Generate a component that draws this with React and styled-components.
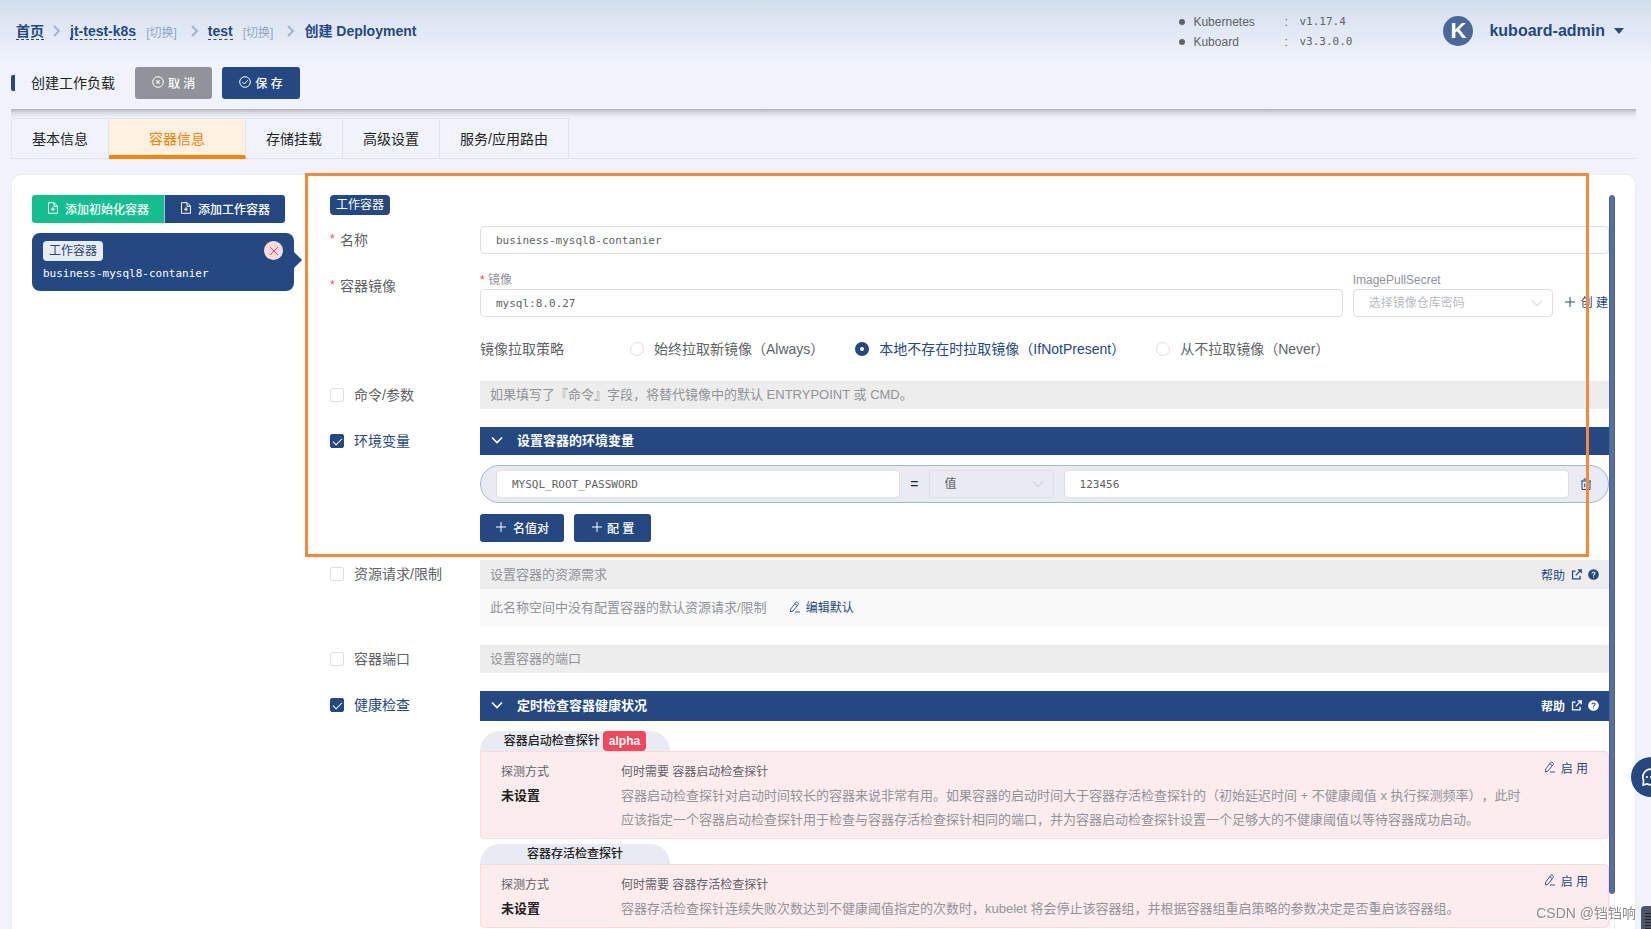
import React, { useState } from 'react';
import styled, { createGlobalStyle, css } from 'styled-components';

const navy = '#244882';

const GlobalStyle = createGlobalStyle`
  * {
    box-sizing: border-box;
  }
  body {
    margin: 0;
    overflow: hidden;
    background: #f0f3fc;
    color: #222;
    font-family: "Liberation Sans", "Noto Sans CJK SC", sans-serif;
    font-size: 14px;
  }
  button, input, select {
    margin: 0;
    font-family: inherit;
  }
  a {
    color: ${navy};
    text-decoration: none;
  }
`;

const Page = styled.div`
  display: flex;
  flex-direction: column;
  height: 100vh;
  overflow: hidden;
  background: linear-gradient(#d3dfec, #f0f3fc 64px);
`;

const Icon = styled.svg.attrs({ fill: 'none', stroke: 'currentColor', 'aria-hidden': true })`
  flex: none;
  width: ${({ $size }) => $size || 12}px;
  height: ${({ $size }) => $size || 12}px;
`;

/* ---------- top bar ---------- */

const TopBar = styled.header`
  display: flex;
  align-items: center;
  height: 62px;
  padding: 0 27px 0 16px;
`;

const Crumbs = styled.nav`
  display: flex;
  align-items: center;
  flex: 1;
  color: ${navy};
  font-weight: bold;
  line-height: 16px;

  a {
    border-bottom: 1px dashed ${navy};
  }
`;

const Switch = styled.button`
  margin-left: 10px;
  padding: 0;
  border: 0;
  background: none;
  color: #93a5c3;
  font-size: 12px;
`;

const CrumbArrow = styled(Icon).attrs({ viewBox: '0 0 8 12', strokeWidth: 2 })`
  width: 8px;
  margin: 0 9px 0 ${({ $wide }) => ($wide ? 14 : 9)}px;
  color: #a3b3cb;
`;

const Versions = styled.ul`
  margin: 0;
  padding: 2px 0 0;
  width: 264px;
  list-style: none;
  color: #606266;
  font-size: 12px;
  line-height: 20px;

  li {
    display: grid;
    grid-template-columns: 14px 91px 15px 1fr;
    align-items: center;
  }
  li::before {
    content: '';
    width: 6px;
    height: 6px;
    border-radius: 50%;
    background: #606266;
  }
`;

const Mono = styled.span`
  font-family: "DejaVu Sans Mono", monospace;
  font-size: 11px;
`;

const User = styled.button`
  display: flex;
  align-items: center;
  padding: 0;
  border: 0;
  background: none;
  color: ${navy};
  font-size: 16px;
  font-weight: bold;
`;

const Avatar = styled.span`
  width: 30px;
  height: 30px;
  margin-right: 16px;
  border-radius: 50%;
  background: #486999;
  color: #fff;
  font-size: 22px;
  line-height: 30px;
`;

const Caret = styled.span`
  margin-left: 9px;
  border: 5px solid transparent;
  border-top: 6px solid ${navy};
  border-bottom: 0;
`;

/* ---------- actions and tabs ---------- */

const Main = styled.main`
  display: flex;
  flex-direction: column;
  flex: 1;
  min-height: 0;
  padding: 0 15px 0 11px;
`;

const Actions = styled.div`
  display: flex;
  flex: none;
  align-items: center;
  gap: 10px;
  height: 47px;
  padding-bottom: 5px;

  h1 {
    margin: 0 10px 0 0;
    padding-left: 16px;
    border-left: 4px solid ${navy};
    border-radius: 2px;
    font-size: 14px;
    font-weight: normal;
    line-height: 16px;
  }
`;

const Shade = styled.div`
  flex: none;
  height: 9px;
  background: linear-gradient(#b0b2b8, #d9dbe2 40%, #f0f3fc);
`;

const Button = styled.button`
  display: inline-flex;
  align-items: center;
  gap: ${({ $spaced }) => ($spaced ? 4 : 6)}px;
  height: ${({ $tall }) => ($tall ? 32 : 28)}px;
  padding: 0 ${({ $spaced }) => ($spaced ? 17 : 15)}px 2px;
  border: 0;
  border-radius: 3px;
  background: ${({ $color }) => $color || navy};
  color: #fff;
  font-size: 12px;
  font-weight: 500;
`;

const Tabs = styled.div`
  display: flex;
  flex: none;
  height: 41px;
  margin-bottom: 15px;
  border-bottom: 1px solid #e0e4ee;
`;

const Tab = styled.button`
  height: 41px;
  padding: 0 20px 2px;
  border: 1px solid #e0e4ee;
  border-left-width: ${({ $first }) => ($first ? 1 : 0)}px;
  border-top-left-radius: ${({ $first }) => ($first ? 4 : 0)}px;
  background: none;
  color: #222;
  font-size: 14px;

  ${({ $active }) => $active && css`
    padding: 1px 40px 0;
    border-bottom: 4px solid #ff8200;
    background: #fff1e2;
    color: #ff8200;
  `}
`;

/* ---------- container list ---------- */

const Card = styled.div`
  display: flex;
  flex: 1;
  min-height: 0;
  padding: 20px 20px 0;
  border: 1px solid #e8ecf5;
  border-bottom: 0;
  border-radius: 10px 10px 0 0;
  background: #fff;
`;

const Side = styled.aside`
  flex: none;
  width: 262px;
  margin-right: 36px;
`;

const ButtonGroup = styled.div`
  display: flex;
  margin-bottom: 10px;

  button:first-child {
    border-radius: 3px 0 0 3px;
  }
  button:last-child {
    border-left: 1px solid #a7c5cc;
    border-radius: 0 3px 3px 0;
  }
`;

const ContainerItem = styled.div`
  position: relative;
  height: 58px;
  padding: 8px 11px;
  border-radius: 8px;
  background: ${navy};
  color: #fff;

  &::after {
    content: '';
    position: absolute;
    top: 19px;
    left: 100%;
    border: 8px solid transparent;
    border-left-color: ${navy};
    border-right: 0;
  }
`;

const ItemHead = styled.div`
  display: flex;
  justify-content: space-between;
  margin-bottom: 3px;
`;

const Tag = styled.span`
  display: inline-block;
  height: 20px;
  padding: 0 6px;
  border-radius: 4px;
  background: ${({ $light }) => ($light ? '#e8ebf3' : navy)};
  color: ${({ $light }) => ($light ? navy : '#fff')};
  font-size: 12px;
  line-height: 20px;
`;

const Remove = styled.button`
  display: grid;
  place-items: center;
  width: 19px;
  height: 19px;
  padding: 0;
  border: 0;
  border-radius: 50%;
  background: #fddadd;
  color: #f5475b;
`;

/* ---------- form ---------- */

const Form = styled.form`
  flex: 1;
  min-width: 0;
  overflow: hidden;
  margin: -30px 0 0 -30px;
  padding: 30px 0 0 30px;
`;

const Rail = styled.div`
  flex: none;
  width: 6px;
  border: solid #f0f0f3;
  border-width: 0 1px;

  &::before {
    content: '';
    display: block;
    height: 95%;
    margin: 0 -1px;
    border: 1px solid #4a6491;
    border-radius: 3px;
    background: #566f9d;
  }
`;

const Highlight = styled.div`
  position: relative;

  &::after {
    content: '';
    position: absolute;
    inset: -22px 20px -15px -25px;
    border: 3px solid #f98837;
    pointer-events: none;
  }
`;

const Title = styled.div`
  height: 31px;
`;

const Row = styled.div`
  display: grid;
  grid-template-columns: 150px minmax(0, 1fr);
  margin-bottom: 18px;
`;

const Label = styled.label`
  display: flex;
  align-items: center;
  height: 28px;
  padding-bottom: 2px;
  color: ${({ $on }) => ($on ? navy : '#606266')};
`;

const Star = styled.span`
  width: 10px;
  color: #f5475b;
  font-size: 12px;
`;

const SubLabel = styled.label`
  display: flex;
  height: 17px;
  color: #8f9298;
  font-size: 12px;
  line-height: 17px;

  ${Star} {
    width: 8px;
  }
`;

const Check = styled.input.attrs({ type: 'checkbox' })`
  appearance: none;
  display: grid;
  place-items: center;
  width: 14px;
  height: 14px;
  margin: 2px 10px 0 0;
  border: 1px solid #dcdfe6;
  border-radius: 2px;
  background: #fff;

  &:checked {
    border-color: ${navy};
    background: ${navy};
  }
  &:checked::after {
    content: '';
    width: 4px;
    height: 8px;
    margin-top: -2px;
    border: solid #fff;
    border-width: 0 1px 1px 0;
    transform: rotate(45deg);
  }
`;

const Radio = styled.input.attrs({ type: 'radio' })`
  appearance: none;
  width: 14px;
  height: 14px;
  margin: 2px 10px 0 0;
  border: 1px solid #dcdfe6;
  border-radius: 50%;
  background: #fff;

  &:checked {
    border: 5px solid ${navy};
  }
`;

const Policy = styled.div`
  display: flex;
  align-items: center;
  height: 28px;
  margin-top: 18px;
  color: #606266;
`;

const PolicyName = styled.span`
  width: 150px;
  padding-bottom: 2px;
`;

const RadioLabel = styled(Label)`
  margin-right: 31px;
`;

const Input = styled.input`
  width: 100%;
  min-width: 0;
  height: 28px;
  padding: 0 15px;
  border: 1px solid #dcdfe6;
  border-radius: 4px;
  background: #fff;
  color: #606266;
  font-family: "DejaVu Sans Mono", monospace;
  font-size: 11px;
`;

const SelectWrap = styled.div`
  position: relative;

  select {
    appearance: none;
    width: 100%;
    height: 28px;
    padding: 0 15px;
    border: 1px solid #dcdfe6;
    border-radius: 4px;
    background: ${({ $muted }) => ($muted ? '#e8ebf3' : '#fff')};
    color: ${({ $muted }) => ($muted ? '#606266' : '#b8bbc2')};
    font-size: 12px;
  }
  svg {
    position: absolute;
    top: 8px;
    right: 10px;
    color: #c0c4cc;
  }
`;

const ImageLine = styled.div`
  display: grid;
  grid-template-columns: minmax(0, 1fr) 200px auto;
  align-items: end;
  gap: 10px;
`;

const TextButton = styled.button`
  display: inline-flex;
  flex: none;
  align-items: center;
  gap: 5px;
  padding: 0;
  border: 0;
  background: none;
  color: ${navy};
  font-size: 12px;
`;

const CreateButton = styled(TextButton)`
  height: 28px;
  padding: 0 1px 3px;
`;

const Bar = styled.div`
  display: flex;
  align-items: center;
  height: ${({ $height }) => $height || 28}px;
  padding: 0 10px 3px;
  background: ${({ $open }) => ($open ? navy : '#ededed')};
  color: ${({ $open }) => ($open ? '#fff' : '#909399')};
  font-size: 13px;
  font-weight: ${({ $open }) => ($open ? 'bold' : 'normal')};

  > svg {
    margin: 0 14px 0 1px;
  }
`;

const Help = styled.a`
  display: flex;
  align-items: center;
  gap: 6px;
  margin: 2px 0 0 auto;
  color: ${({ $open }) => ($open ? '#fff' : navy)};
  font-size: 12px;
`;

const Note = styled.div`
  display: flex;
  align-items: center;
  gap: 22px;
  height: 38px;
  padding: 0 10px 3px;
  background: #f9f9f9;
  color: #909399;
  font-size: 13px;
`;

const Pair = styled.div`
  display: grid;
  grid-template-columns: 4fr auto 125px 5fr auto;
  align-items: center;
  gap: 10px;
  height: 38px;
  margin: 10px 0 11px;
  padding: 0 15px;
  border: 1px solid #a7b6cf;
  border-radius: 19px;
  background: #e8ebf3;
`;

const Buttons = styled.div`
  display: flex;
  gap: 10px;
`;

/* ---------- probes ---------- */

const ProbeTitle = styled.div`
  width: 190px;
  height: 20px;
  margin-top: ${({ $first }) => ($first ? 10 : 5)}px;
  border-radius: 20px 20px 0 0;
  background: #e8ebf3;
  font-size: 12px;
  font-weight: 500;
  line-height: 20px;
  text-align: center;
`;

const Alpha = styled.span`
  display: inline-block;
  height: 20px;
  margin-left: 3px;
  padding: 0 6px;
  border-radius: 4px;
  background: #f5475b;
  color: #fff;
  font-weight: bold;
`;

const ProbeBox = styled.div`
  display: grid;
  grid-template-columns: 120px minmax(0, 1fr) auto;
  align-items: start;
  padding: 8px 20px 6px;
  border: 1px solid #fbd9dc;
  border-radius: 0 4px 4px 4px;
  background: #fdecee;
  color: #606266;
  font-size: 12px;
  line-height: 24px;

  strong {
    display: block;
    color: #222;
    font-size: 13px;
  }
  p {
    margin: 0;
    color: #909399;
    font-size: 13px;
    text-spacing-trim: space-all;
  }
  button {
    height: 14px;
    margin-left: 20px;
  }
`;

/* ---------- overlays ---------- */

const Chat = styled.button`
  position: fixed;
  right: -20px;
  bottom: 132px;
  width: 40px;
  height: 40px;
  padding: 0 0 0 10px;
  border: 0;
  border-radius: 50%;
  background: ${navy};
  color: #fff;

  svg {
    display: block;
  }
`;

const Watermark = styled.div`
  position: fixed;
  right: 15px;
  bottom: 6px;
  color: #8c8c8c;
  font-size: 14px;
  line-height: 20px;
  text-shadow: 1px 1px 0 #fff;
`;

const Corner = styled.div`
  position: fixed;
  right: 0;
  bottom: 0;
  width: 10px;
  height: 23px;
  padding: 7px 0 0 4px;
  border-top-left-radius: 4px;
  background: #50566a;

  &::before {
    content: '';
    display: block;
    height: 16px;
    background: repeating-linear-gradient(#23262f 0 1px, #50566a 1px 3px);
  }
`;

const CloseCircle = () => (
  <Icon viewBox="0 0 12 12"><circle cx="6" cy="6" r="5.3" /><path d="M4.4 4.4l3.200 3.200M7.600 4.400L4.400 7.600" strokeWidth="1.3" /></Icon>
);

const CheckCircle = () => (
  <Icon viewBox="0 0 12 12"><circle cx="6" cy="6" r="5.3" /><path d="M3.4 6.1l1.9 1.9 3.4-3.7" /></Icon>
);

const FileAdd = () => (
  <Icon viewBox="0 0 12 12"><path d="M1.5.7h5.700l3.300 3.400v7.200h-9zM7 .9v3.400h3.300M6 5.200v4M4 7.200h4" /></Icon>
);

const Plus = () => (
  <Icon viewBox="0 0 12 12"><path d="M6 1v10M1 6h10" /></Icon>
);

const Down = (props) => (
  <Icon viewBox="0 0 12 12" {...props}><path d="M1 3.5l5 5 5-5" /></Icon>
);

const Pencil = () => (
  <Icon viewBox="0 0 12 12" strokeWidth=".9"><path d="M1.6 8.2L6.9 1.3a.9.9 0 0 1 1.3-.1l1 .8a.9.9 0 0 1 .1 1.3L4.1 10l-2.7.9zM5.9 2.7l2.3 1.8M6 11h5" /></Icon>
);

const Trash = () => (
  <Icon viewBox="0 0 14 14" $size={14}><path d="M2 4h10M3 4v8.5h8V4M5 4V2h4v2M5.7 6.5v3.6M8.3 6.5v3.6" /></Icon>
);

const HelpLink = ({ open }) => (
  <Help href="#help" $open={open}>
    帮助
    <Icon viewBox="0 0 12 12" $size={11} strokeWidth="1.4"><path d="M5 2.2H1.7v8.6h8.2V7.4M5.2 7l5.400-5.600M7.400 1h3.800v3.600" /></Icon>
    <Icon viewBox="0 0 12 12" $size={11}>
      <circle cx="6" cy="6" r="5.8" fill="currentColor" stroke="none" />
      <path d="M4.4 4.8c0-2.1 3.300-2.100 3.300-.1C7.700 5.800 6 5.800 6 7.300M6 8.300v1.100" stroke={open ? navy : '#fff'} strokeWidth="1.1" />
    </Icon>
  </Help>
);

const OptionRow = ({ label, checked, children }) => {
  const [on, setOn] = useState(!!checked);
  return (
    <Row>
      <Label $on={on}>
        <Check checked={on} onChange={(e) => setOn(e.target.checked)} />
        {label}
      </Label>
      <div>{children}</div>
    </Row>
  );
};

const Probe = ({ name, alpha, first, children }) => (
  <>
    <ProbeTitle $first={first}>
      {name}
      {alpha && <Alpha>alpha</Alpha>}
    </ProbeTitle>
    <ProbeBox>
      <div>探测方式<strong>未设置</strong></div>
      <div>何时需要 {name}<p>{children}</p></div>
      <TextButton type="button"><Pencil />启 用</TextButton>
    </ProbeBox>
  </>
);

const tabs = ['基本信息', '容器信息', '存储挂载', '高级设置', '服务/应用路由'];

const policies = [
  ['Always', '始终拉取新镜像（Always）'],
  ['IfNotPresent', '本地不存在时拉取镜像（IfNotPresent）'],
  ['Never', '从不拉取镜像（Never）'],
];

const Header = () => (
  <TopBar>
    <Crumbs>
      <a href="#home">首页</a>
      <CrumbArrow><path d="M1 1l5 5-5 5" /></CrumbArrow>
      <a href="#cluster">jt-test-k8s</a>
      <Switch>[切换]</Switch>
      <CrumbArrow $wide><path d="M1 1l5 5-5 5" /></CrumbArrow>
      <a href="#namespace">test</a>
      <Switch>[切换]</Switch>
      <CrumbArrow $wide><path d="M1 1l5 5-5 5" /></CrumbArrow>
      <span>创建 Deployment</span>
    </Crumbs>
    <Versions>
      <li>Kubernetes<span>:</span><Mono>v1.17.4</Mono></li>
      <li>Kuboard<span>:</span><Mono>v3.3.0.0</Mono></li>
    </Versions>
    <User>
      <Avatar>K</Avatar>
      kuboard-admin
      <Caret />
    </User>
  </TopBar>
);

export default function App() {
  const [tab, setTab] = useState(1);
  const [policy, setPolicy] = useState('IfNotPresent');

  return (
    <Page>
      <GlobalStyle />
      <Header />
      <Main>
        <Actions>
          <h1>创建工作负载</h1>
          <Button $tall $spaced $color="#909399"><CloseCircle />取 消</Button>
          <Button $tall $spaced><CheckCircle />保 存</Button>
        </Actions>
        <Shade />
        <Tabs>
          {tabs.map((name, i) => (
            <Tab key={name} $first={i === 0} $active={i === tab} onClick={() => setTab(i)}>{name}</Tab>
          ))}
        </Tabs>
        <Card>
          <Side>
            <ButtonGroup>
              <Button $color="#13bf8f"><FileAdd />添加初始化容器</Button>
              <Button><FileAdd />添加工作容器</Button>
            </ButtonGroup>
            <ContainerItem>
              <ItemHead>
                <Tag $light>工作容器</Tag>
                <Remove aria-label="删除">
                  <Icon viewBox="0 0 12 12"><path d="M2 2l8 8M10 2l-8 8" /></Icon>
                </Remove>
              </ItemHead>
              <Mono>business-mysql8-contanier</Mono>
            </ContainerItem>
          </Side>
          <Form>
            <Highlight>
              <Title><Tag>工作容器</Tag></Title>
              <Row>
                <Label htmlFor="name"><Star>*</Star>名称</Label>
                <Input id="name" defaultValue="business-mysql8-contanier" />
              </Row>
              <Row>
                <Label htmlFor="image"><Star>*</Star>容器镜像</Label>
                <div>
                  <ImageLine>
                    <div>
                      <SubLabel htmlFor="image"><Star>*</Star>镜像</SubLabel>
                      <Input id="image" defaultValue="mysql:8.0.27" />
                    </div>
                    <div>
                      <SubLabel htmlFor="secret">ImagePullSecret</SubLabel>
                      <SelectWrap>
                        <select id="secret"><option>选择镜像仓库密码</option></select>
                        <Down />
                      </SelectWrap>
                    </div>
                    <CreateButton type="button"><Plus />创 建</CreateButton>
                  </ImageLine>
                  <Policy>
                    <PolicyName>镜像拉取策略</PolicyName>
                    {policies.map(([value, text]) => (
                      <RadioLabel key={value} $on={policy === value}>
                        <Radio name="policy" checked={policy === value} onChange={() => setPolicy(value)} />
                        {text}
                      </RadioLabel>
                    ))}
                  </Policy>
                </div>
              </Row>
              <OptionRow label="命令/参数">
                <Bar>如果填写了『命令』字段，将替代镜像中的默认 ENTRYPOINT 或 CMD。</Bar>
              </OptionRow>
              <OptionRow label="环境变量" checked>
                <Bar $open><Down strokeWidth="1.6" />设置容器的环境变量</Bar>
                <Pair>
                  <Input aria-label="名称" defaultValue="MYSQL_ROOT_PASSWORD" />
                  <span>=</span>
                  <SelectWrap $muted>
                    <select aria-label="类型"><option>值</option></select>
                    <Down />
                  </SelectWrap>
                  <Input aria-label="值" defaultValue="123456" />
                  <TextButton type="button" aria-label="删除"><Trash /></TextButton>
                </Pair>
                <Buttons>
                  <Button type="button"><Plus />名值对</Button>
                  <Button type="button" $spaced><Plus />配 置</Button>
                </Buttons>
              </OptionRow>
            </Highlight>
            <OptionRow label="资源请求/限制">
              <Bar $height={29}>设置容器的资源需求<HelpLink /></Bar>
              <Note>
                此名称空间中没有配置容器的默认资源请求/限制
                <TextButton type="button"><Pencil />编辑默认</TextButton>
              </Note>
            </OptionRow>
            <OptionRow label="容器端口">
              <Bar>设置容器的端口</Bar>
            </OptionRow>
            <OptionRow label="健康检查" checked>
              <Bar $open $height={30}><Down strokeWidth="1.6" />定时检查容器健康状况<HelpLink open /></Bar>
              <Probe name="容器启动检查探针" alpha first>
                容器启动检查探针对启动时间较长的容器来说非常有用。如果容器的启动时间大于容器存活检查探针的（初始延迟时间 + 不健康阈值 x 执行探测频率），此时应该指定一个容器启动检查探针用于检查与容器存活检查探针相同的端口，并为容器启动检查探针设置一个足够大的不健康阈值以等待容器成功启动。
              </Probe>
              <Probe name="容器存活检查探针">
                容器存活检查探针连续失败次数达到不健康阈值指定的次数时，kubelet 将会停止该容器组，并根据容器组重启策略的参数决定是否重启该容器组。
              </Probe>
            </OptionRow>
          </Form>
          <Rail />
        </Card>
      </Main>
      <Chat aria-label="反馈">
        <Icon viewBox="0 0 24 24" $size={20} strokeWidth="2">
          <path d="M12 2.5a9.500 9.500 0 1 1-4.800 17.700L2.500 21.500l.6-5.600A9.500 9.500 0 0 1 12 2.500z" />
          <path d="M7 12h.1M12 12h.1M17 12h.1" strokeWidth="2.6" strokeLinecap="round" />
        </Icon>
      </Chat>
      <Watermark>CSDN @铛铛响</Watermark>
      <Corner />
    </Page>
  );
}
